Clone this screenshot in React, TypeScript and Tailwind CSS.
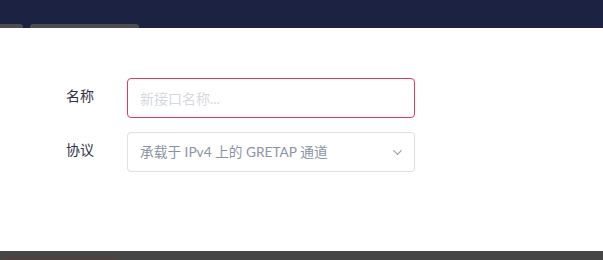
import React from "react";

const Field = ({ label, children }: { label: string; children: React.ReactNode }) => (
  <div className="flex items-center">
    <div className="w-[127px] pb-[5px] pl-[66px] text-[14px] text-[#2f3148]">{label}</div>
    {children}
  </div>
);

export default function App() {
  return (
    <div
      className="flex h-[260px] w-[603px] flex-col overflow-hidden bg-white"
      style={{ fontFamily: 'Lato, "Noto Sans CJK SC", sans-serif' }}
    >
      <div className="flex h-[28px] items-end gap-[7px] bg-[#1c2242]">
        <div className="h-[4px] w-[23px] rounded-tr-[3px] bg-[#4b4d50]" />
        <div className="h-[4px] w-[109px] rounded-t-[3px] bg-[#4b4d50]" />
      </div>
      <div className="flex flex-1 flex-col gap-[14px] pt-[50px]">
        <Field label="名称">
          <input
            placeholder="新接口名称..."
            className="h-[40px] w-[288px] rounded-[4px] border border-[#e8385a] px-[12px] text-[14px] text-[#303248] outline-none placeholder:text-[#d6d9e0]"
          />
        </Field>
        <Field label="协议">
          <div className="flex h-[40px] w-[288px] items-center justify-between rounded-[4px] border border-[#dcdfe6] pl-[12px] pr-[9px] text-[13.7px] text-[#8a93a6]">
            <span>承载于 IPv4 上的 GRETAP 通道</span>
            <svg width="15" height="15" viewBox="0 0 24 24" fill="none" stroke="#9aa1b0" strokeWidth="2" strokeLinecap="round" strokeLinejoin="round">
              <path d="M6 9l6 6 6-6" />
            </svg>
          </div>
        </Field>
      </div>
      <div className="flex h-[9px] items-end bg-[#464646]">
        <div className="ml-[3px] h-[1px] w-[113px] bg-[#5a3a3c]" />
      </div>
    </div>
  );
}
